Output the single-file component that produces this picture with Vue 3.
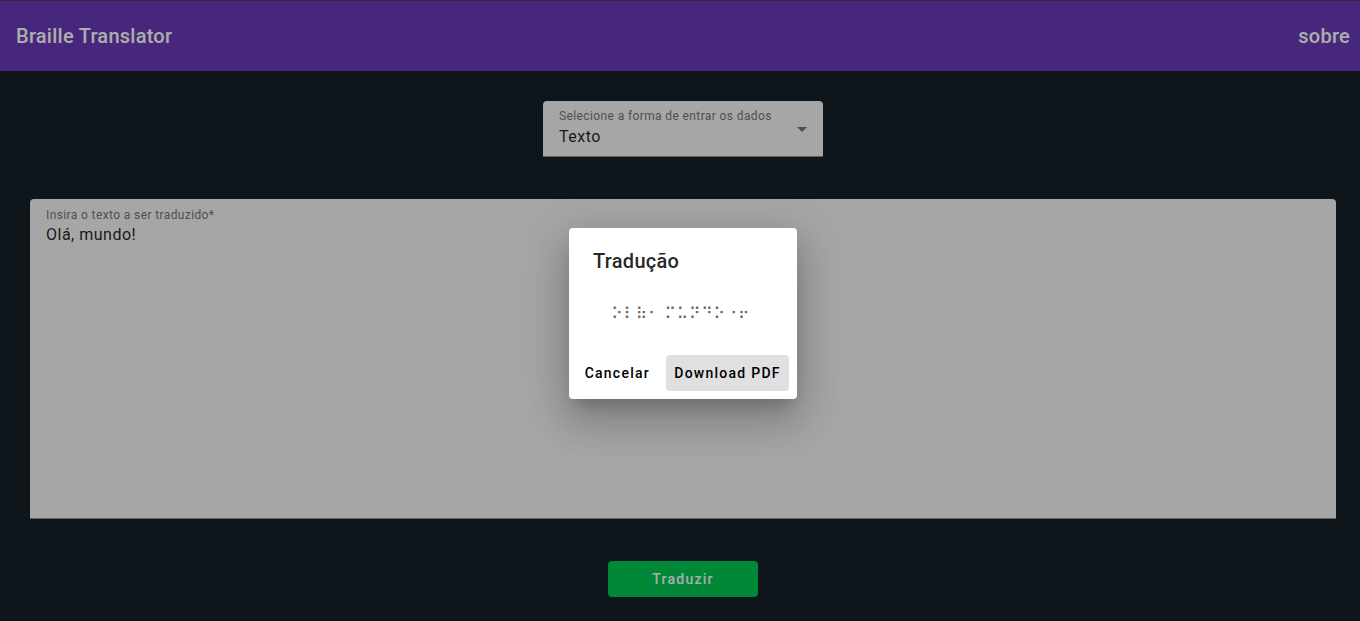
<script setup>
import { ref } from 'vue'

const mode = ref('Texto')
const text = ref('Olá, mundo!')
const braille = '⠕⠇⠷⠂ ⠍⠥⠝⠙⠕⠐⠖'
</script>

<template>
  <div class="page">
    <header class="toolbar">
      <span>Braille Translator</span>
      <span>sobre</span>
    </header>
    <main class="content">
      <div class="field select">
        <div>
          <div class="label">Selecione a forma de entrar os dados</div>
          <div class="value">{{ mode }}</div>
        </div>
        <svg class="arrow" width="10" height="5" viewBox="0 0 10 5"><path d="M0 0h10L5 5z" /></svg>
      </div>
      <div class="field area">
        <div class="label">Insira o texto a ser traduzido*</div>
        <div class="value">{{ text }}</div>
      </div>
      <button class="translate">Traduzir</button>
    </main>
    <div class="overlay">
      <section class="dialog">
        <h2>Tradução</h2>
        <p class="braille">{{ braille }}</p>
        <div class="actions">
          <button>Cancelar</button>
          <button class="focused">Download PDF</button>
        </div>
      </section>
    </div>
  </div>
</template>

<style>
body {
  margin: 0;
  overflow: hidden;
}
</style>

<style scoped>
.page {
  position: relative;
  box-sizing: border-box;
  width: 100%;
  height: 621px;
  background: #15212a;
  font-family: Roboto, 'DejaVu Sans', sans-serif;
}
.toolbar {
  box-sizing: border-box;
  height: 71px;
  padding: 0 10px 0 16px;
  border-top: 1px solid #47395a;
  background: #673ab7;
  color: #fff;
  display: flex;
  align-items: center;
  justify-content: space-between;
  font-size: 20px;
  font-weight: 500;
  letter-spacing: 0.25px;
}
.content {
  display: flex;
  flex-direction: column;
  align-items: center;
  padding: 30px 24px 0 30px;
}
.field {
  box-sizing: border-box;
  padding: 7px 16px 0;
  border-bottom: 1px solid #8c8c8c;
  border-radius: 4px 4px 0 0;
  background: #f5f5f5;
}
.select {
  width: 280px;
  height: 56px;
  display: flex;
  justify-content: space-between;
}
.select .value {
  margin-top: 1px;
}
.arrow {
  margin-top: 19px;
  fill: #757575;
}
.area {
  width: 100%;
  height: 320px;
  margin-top: 42px;
  padding-top: 8px;
}
.label {
  font-size: 12px;
  line-height: 16px;
  letter-spacing: 0.385px;
  color: #757575;
}
.value {
  font-size: 16px;
  line-height: 24px;
  letter-spacing: 0.5px;
  color: rgba(0, 0, 0, 0.87);
}
button {
  height: 36px;
  padding: 0 8px;
  border: 0;
  border-radius: 4px;
  background: transparent;
  color: #000;
  font: 500 14px Roboto, sans-serif;
  letter-spacing: 1.25px;
}
.translate {
  width: 150px;
  margin-top: 42px;
  background: #00c853;
  color: #fff;
}
.overlay {
  position: absolute;
  inset: 0;
  background: rgba(0, 0, 0, 0.32);
  display: flex;
  align-items: center;
  justify-content: center;
  padding: 6px 0 0 6px;
}
.dialog {
  box-sizing: border-box;
  width: 228px;
  height: 171px;
  border-radius: 4px;
  background: #fff;
  box-shadow: 0 11px 15px -7px rgba(0, 0, 0, 0.2), 0 24px 38px 3px rgba(0, 0, 0, 0.14),
    0 9px 46px 8px rgba(0, 0, 0, 0.12);
}
h2 {
  margin: 0;
  padding: 17px 24px 0;
  font-size: 20px;
  font-weight: 500;
  line-height: 32px;
  letter-spacing: 0.28px;
  color: rgba(0, 0, 0, 0.87);
}
.braille {
  margin: 0;
  height: 78px;
  padding: 25px 0 0 42px;
  box-sizing: border-box;
  font-size: 16px;
  line-height: 24px;
  letter-spacing: 0.5px;
  color: rgba(0, 0, 0, 0.6);
  white-space: nowrap;
}
.actions {
  display: flex;
  justify-content: flex-end;
  gap: 8px;
  padding-right: 8px;
}
.actions .focused {
  width: 123px;
  background: #e0e0e0;
}
</style>
